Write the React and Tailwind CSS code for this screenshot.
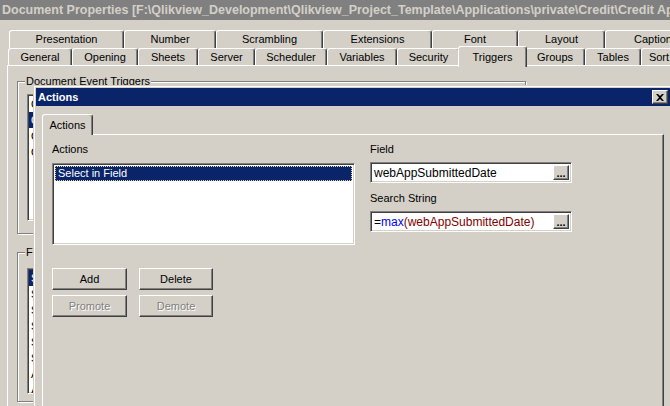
import React from 'react';

const raised =
  'border border-t-white border-l-white border-r-[#404040] border-b-[#404040] shadow-[inset_-1px_-1px_0_#808080]';
const sunken =
  'border border-t-[#808080] border-l-[#808080] border-r-white border-b-white shadow-[inset_1px_1px_0_#404040,inset_-1px_-1px_0_#d4d0c8]';

const topTabs = [
  { label: 'Presentation', w: 'w-[115px]' },
  { label: 'Number', w: 'w-[92px]' },
  { label: 'Scrambling', w: 'w-[107px]' },
  { label: 'Extensions', w: 'w-[109px]' },
  { label: 'Font', w: 'w-[86px]' },
  { label: 'Layout', w: 'w-[87px]' },
  { label: 'Caption', w: 'w-[96px]' }
];

const bottomTabs = [
  { label: 'General', w: 'w-[64px]' },
  { label: 'Opening', w: 'w-[66px]' },
  { label: 'Sheets', w: 'w-[60px]' },
  { label: 'Server', w: 'w-[57px]' },
  { label: 'Scheduler', w: 'w-[72px]' },
  { label: 'Variables', w: 'w-[70px]' },
  { label: 'Security', w: 'w-[63px]' },
  { label: 'Triggers', w: 'w-[69px]', active: true },
  { label: 'Groups', w: 'w-[60px]' },
  { label: 'Tables', w: 'w-[56px]' },
  { label: 'Sort', w: 'w-[36px]' }
];

const docEvents = ['OnAnySelect', 'OnAnyLockUnlock', 'OnAnyChangeOfVariable', 'OnOpen'];
const fieldEvents = ['SubmittedDate', 'Status', 'Segment', 'Source', 'Score', 'State', 'Applicant', 'AppType'];

function Tab({ label, w, active }) {
  if (active) {
    return (
      <div
        className={`${w} relative z-10 -mx-[2px] -mt-[2px] h-[21px] shrink-0 flex items-start justify-center pt-[2px] bg-[#d4d0c8] border-t border-l border-r border-t-white border-l-white border-r-[#404040] rounded-t-[3px] shadow-[inset_-1px_0_0_#808080]`}
      >
        {label}
      </div>
    );
  }
  return (
    <div
      className={`${w} h-full shrink-0 flex items-center justify-center whitespace-nowrap border-t border-l border-r border-t-white border-l-white border-r-[#404040] rounded-t-[3px] shadow-[inset_-1px_0_0_#808080]`}
    >
      {label}
    </div>
  );
}

function GroupBox({ label, className, children }) {
  return (
    <div className={`relative w-[509px] border border-[#808080] shadow-[inset_1px_1px_0_#fff,1px_1px_0_#fff] ${className}`}>
      <span className="absolute -top-[7px] left-[7px] px-[1px] leading-[13px] bg-[#d4d0c8]">{label}</span>
      {children}
    </div>
  );
}

function ListBox({ items, className }) {
  return (
    <div className={`${sunken} bg-white p-[1px] overflow-hidden ${className}`}>
      {items.map((item, i) => (
        <div
          key={item}
          className={`h-[16px] leading-[16px] pl-[2px] whitespace-nowrap ${i === (items.length > 4 ? 0 : 1) ? 'bg-[#0a246a] text-white' : 'text-black'}`}
        >
          {item}
        </div>
      ))}
    </div>
  );
}

function Button({ children, w, disabled }) {
  return (
    <div
      className={`${raised} ${w} h-[22px] flex items-center justify-center ${
        disabled ? 'text-[#808080] [text-shadow:1px_1px_0_#fff]' : 'text-black'
      }`}
    >
      {children}
    </div>
  );
}

function EditField({ children }) {
  return (
    <div className={`${sunken} bg-white h-[21px] flex items-stretch p-[2px]`}>
      <div className="flex-1 pl-[1px] text-[12px] leading-[17px] whitespace-nowrap overflow-hidden">{children}</div>
      <div className={`${raised} bg-[#d4d0c8] w-[16px] flex items-end justify-center font-bold leading-[10px] pb-[1px] text-black`}>
        ...
      </div>
    </div>
  );
}

export default function App() {
  return (
    <div className="relative w-[670px] h-[406px] overflow-hidden bg-[#d4d0c8] text-[11px] text-black font-['Liberation_Sans',Arial,sans-serif]">
      {/* main window title */}
      <div className="h-[20px] bg-[#808080] text-[#d4d0c8] text-[12.5px] font-bold leading-[20px] pl-[2px] whitespace-nowrap overflow-hidden">
        {'Document Properties [F:\\Qlikview_Development\\Qlikview_Project_Template\\Applications\\private\\Credit\\Credit App Review.qvw]'}
      </div>

      {/* tab rows */}
      <div className="mt-[10px] h-[18px] pl-[9px] flex">
        {topTabs.map((t) => (
          <Tab key={t.label} {...t} />
        ))}
      </div>
      <div className="h-[17px] pl-[8px] flex">
        {bottomTabs.map((t) => (
          <Tab key={t.label} {...t} />
        ))}
      </div>

      {/* main panel */}
      <div className="ml-[7px] h-[341px] border-t border-l border-white pl-[9px] pt-[15px]">
        <GroupBox label="Document Event Triggers" className="h-[153px] pl-[9px] pt-[12px]">
          <ListBox items={docEvents} className="w-[490px] h-[127px]" />
        </GroupBox>
        <GroupBox label="Field Event Triggers" className="mt-[18px] h-[150px] pl-[9px] pt-[15px]">
          <ListBox items={fieldEvents} className="w-[490px] h-[126px]" />
        </GroupBox>
      </div>

      {/* Actions dialog */}
      <div className="absolute left-[33px] top-[85px] w-[640px] h-[340px] bg-[#d4d0c8] border border-[#d4d0c8] shadow-[inset_1px_1px_0_#fff] p-[2px]">
        <div className="h-[18px] bg-[#0a246a] flex items-center justify-between pl-[2px] pr-[2px]">
          <span className="text-white font-bold">Actions</span>
          <div className={`${raised} bg-[#d4d0c8] w-[16px] h-[14px] flex items-center justify-center`}>
            <svg width="8" height="7" viewBox="0 0 8 7">
              <path d="M0 0h2l2 2 2-2h2L5 3.5 8 7H6L4 5 2 7H0l3-3.5z" fill="#000" />
            </svg>
          </div>
        </div>

        <div className="mx-[6px] mt-[8px]">
          <div className="w-[51px] h-[21px] relative z-10 -mb-[1px] flex items-center justify-center bg-[#d4d0c8] border-t border-l border-r border-t-white border-l-white border-r-[#404040] rounded-t-[3px] shadow-[inset_-1px_0_0_#808080]">
            Actions
          </div>
          <div className="h-[300px] border-t border-l border-r border-t-white border-l-white border-r-[#404040] shadow-[inset_-1px_0_0_#808080] pl-[9px] pt-[8px] flex">
            <div className="w-[303px]">
              <div className="h-[13px] leading-[13px]">Actions</div>
              <div className={`${sunken} bg-white mt-[7px] h-[82px] p-[2px]`}>
                <div className="h-[15px] leading-[13px] pl-[2px] bg-[#0a246a] text-white border border-dotted border-[#e8d8a0]">
                  Select in Field
                </div>
              </div>
              <div className="mt-[23px] flex gap-[12px]">
                <Button w="w-[75px]">Add</Button>
                <Button w="w-[74px]">Delete</Button>
              </div>
              <div className="mt-[5px] flex gap-[12px]">
                <Button w="w-[75px]" disabled>
                  Promote
                </Button>
                <Button w="w-[74px]" disabled>
                  Demote
                </Button>
              </div>
            </div>
            <div className="ml-[15px] w-[202px]">
              <div className="h-[13px] leading-[13px]">Field</div>
              <div className="mt-[6px]">
                <EditField>webAppSubmittedDate</EditField>
              </div>
              <div className="mt-[9px] h-[13px] leading-[13px]">Search String</div>
              <div className="mt-[6px]">
                <EditField>
                  =<span className="text-[#0000ff]">max</span>
                  <span className="text-[#800000]">(webAppSubmittedDate)</span>
                </EditField>
              </div>
            </div>
          </div>
        </div>
      </div>
    </div>
  );
}
